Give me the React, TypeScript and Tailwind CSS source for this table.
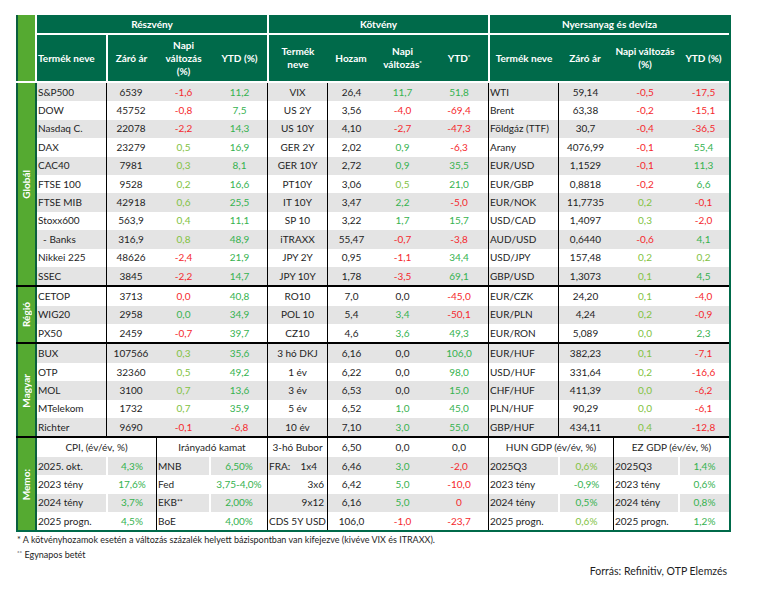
import React from "react"

const GRID = "grid grid-cols-[69px_49px_57px_55px_60px_48px_55px_58px_70px_54px_66px_51px]"
const MEMO_GRID = "grid grid-cols-[69px_50px_53px_58px_60px_48px_55px_58px_70px_55px_65px_51px]"
const GRAY = "bg-[#e4e4e4]"

const TONE: Record<string, string> = {
  r: "text-[#f5282d]",
  g: "text-[#35b24f]",
  l: "text-[#82c23f]",
  k: "text-[#1e1e1e]",
}

// "x:..." forces a colour, otherwise sign/size decides
function tone(v: string): [string, string] {
  if (v[1] === ":") return [v.slice(2), TONE[v[0]]]
  const n = parseFloat(v.replace(",", ".").replace("%", ""))
  if (n < 0) return [v, TONE.r]
  if (n < 1) return [v, TONE.l]
  return [v, TONE.g]
}

type Row = string[]

const globalRows: Row[] = [
  ["S&P500", "6539", "-1,6", "11,2", "VIX", "26,4", "11,7", "51,8", "WTI", "59,14", "-0,5", "-17,5"],
  ["DOW", "45752", "-0,8", "7,5", "US 2Y", "3,56", "-4,0", "-69,4", "Brent", "63,38", "-0,2", "-15,1"],
  ["Nasdaq C.", "22078", "-2,2", "14,3", "US 10Y", "4,10", "-2,7", "-47,3", "Földgáz (TTF)", "30,7", "-0,4", "-36,5"],
  ["DAX", "23279", "0,5", "16,9", "GER 2Y", "2,02", "g:0,9", "-6,3", "Arany", "4076,99", "-0,1", "55,4"],
  ["CAC40", "7981", "0,3", "8,1", "GER 10Y", "2,72", "g:0,9", "35,5", "EUR/USD", "1,1529", "-0,1", "11,3"],
  ["FTSE 100", "9528", "0,2", "16,6", "PT10Y", "3,06", "0,5", "21,0", "EUR/GBP", "0,8818", "-0,2", "6,6"],
  ["FTSE MIB", "42918", "0,6", "25,5", "IT 10Y", "3,47", "2,2", "-5,0", "EUR/NOK", "11,7735", "0,2", "-0,1"],
  ["Stoxx600", "563,9", "0,4", "11,1", "SP 10", "3,22", "1,7", "15,7", "USD/CAD", "1,4097", "0,3", "-2,0"],
  ["\u00a0\u00a0- Banks", "316,9", "0,8", "48,9", "iTRAXX", "55,47", "-0,7", "-3,8", "AUD/USD", "0,6440", "-0,6", "4,1"],
  ["Nikkei 225", "48626", "-2,4", "21,9", "JPY 2Y", "0,95", "-1,1", "34,4", "USD/JPY", "157,48", "0,2", "0,2"],
  ["SSEC", "3845", "-2,2", "14,7", "JPY 10Y", "1,78", "-3,5", "69,1", "GBP/USD", "1,3073", "0,1", "4,5"],
]

const regioRows: Row[] = [
  ["CETOP", "3713", "r:0,0", "40,8", "RO10", "7,0", "k:0,0", "-45,0", "EUR/CZK", "24,20", "0,1", "-4,0"],
  ["WIG20", "2958", "g:0,0", "34,9", "POL 10", "5,4", "3,4", "-50,1", "EUR/PLN", "4,24", "0,2", "-0,9"],
  ["PX50", "2459", "-0,7", "39,7", "CZ10", "4,6", "3,6", "49,3", "EUR/RON", "5,089", "l:0,0", "2,3"],
]

const magyarRows: Row[] = [
  ["BUX", "107566", "0,3", "35,6", "3 hó DKJ", "6,16", "k:0,0", "106,0", "EUR/HUF", "382,23", "0,1", "-7,1"],
  ["OTP", "32360", "0,5", "49,2", "1 év", "6,22", "k:0,0", "98,0", "USD/HUF", "331,64", "0,2", "-16,6"],
  ["MOL", "3100", "0,7", "13,6", "3 év", "6,53", "k:0,0", "15,0", "CHF/HUF", "411,39", "l:0,0", "-6,2"],
  ["MTelekom", "1732", "0,7", "35,9", "5 év", "6,52", "1,0", "45,0", "PLN/HUF", "90,29", "l:0,0", "-6,1"],
  ["Richter", "9690", "-0,1", "-6,8", "10 év", "7,10", "3,0", "55,0", "GBP/HUF", "434,11", "0,4", "-12,8"],
]

type MemoRow = {
  cpi: [string, string]
  rate: [React.ReactNode, string]
  bond: [React.ReactNode, string, string, string]
  hun: [string, string]
  ez: [string, string]
}

const memoRows: MemoRow[] = [
  {
    cpi: ["2025. okt.", "4,3%"],
    rate: ["MNB", "6,50%"],
    bond: [
      <span className="flex w-full pl-[1px] pr-[10px]">
        <span>FRA:</span>
        <span className="ml-auto">1x4</span>
      </span>,
      "6,46", "3,0", "-2,0",
    ],
    hun: ["2025Q3", "0,6%"],
    ez: ["2025Q3", "1,4%"],
  },
  {
    cpi: ["2023 tény", "17,6%"],
    rate: ["Fed", "3,75-4,0%"],
    bond: [<span className="ml-auto pr-[3px]">3x6</span>, "6,42", "5,0", "-10,0"],
    hun: ["2023 tény", "g:-0,9%"],
    ez: ["2023 tény", "g:0,6%"],
  },
  {
    cpi: ["2024 tény", "3,7%"],
    rate: [<span>EKB<sup className="relative top-[-1px] text-[7px]">**</sup></span>, "2,00%"],
    bond: [<span className="ml-auto pr-[3px]">9x12</span>, "6,16", "5,0", "r:0"],
    hun: ["2024 tény", "g:0,5%"],
    ez: ["2024 tény", "g:0,8%"],
  },
  {
    cpi: ["2025 progn.", "4,5%"],
    rate: ["BoE", "4,00%"],
    bond: [<span className="mx-auto">CDS 5Y USD</span>, "106,0", "-1,0", "-23,7"],
    hun: ["2025 progn.", "0,6%"],
    ez: ["2025 progn.", "1,2%"],
  },
]

function Val({ v, className = "" }: { v: string; className?: string }) {
  const [text, cls] = tone(v)
  return <div className={`flex items-center justify-center ${cls} ${className}`}>{text}</div>
}

function DataRow({ r, gray }: { r: Row; gray: boolean }) {
  return (
    <div className={`${GRID} h-[18.4px] ${gray ? GRAY : "bg-white"}`}>
      <div className="flex items-center whitespace-nowrap pl-[1px]">{r[0]}</div>
      <div className="flex items-center justify-center border-l border-black">{r[1]}</div>
      <Val v={r[2]} />
      <Val v={r[3]} />
      <div className="flex items-center justify-center border-l border-black">{r[4]}</div>
      <div className="flex items-center justify-center border-l border-black">{r[5]}</div>
      <Val v={r[6]} />
      <Val v={r[7]} />
      <div className="flex items-center whitespace-nowrap border-l border-black pl-[1px]">{r[8]}</div>
      <div className="flex items-center justify-center border-l border-black">{r[9]}</div>
      <Val v={r[10]} />
      <Val v={r[11]} />
    </div>
  )
}

function Side({ label }: { label: string }) {
  return (
    <div className="flex w-[21px] shrink-0 items-center justify-center border-x-2 border-[#0b5f3d] bg-[#55aa31]">
      <span className="rotate-180 font-bold text-white [writing-mode:vertical-rl]">{label}</span>
    </div>
  )
}

// grayFirst: whether the group's first row is shaded
function Group({ label, rows, first = false, grayFirst }: { label: string; rows: Row[]; first?: boolean; grayFirst: boolean }) {
  return (
    <div className={`flex ${first ? "" : "border-t-2 border-black"}`}>
      <Side label={label} />
      <div className="flex flex-1 flex-col">
        {rows.map((r, i) => (
          <DataRow key={r[0]} r={r} gray={(i % 2 === 0) === grayFirst} />
        ))}
      </div>
    </div>
  )
}

function Memo() {
  return (
    <div className="flex border-t-2 border-black">
      <Side label="Memo:" />
      <div className="flex flex-1 flex-col">
        <div className={`${MEMO_GRID} h-[18.4px] bg-white`}>
          <div className="col-span-2 flex items-center justify-center">CPI, (év/év, %)</div>
          <div className="col-span-2 flex items-center justify-center border-l border-black">Irányadó kamat</div>
          <div className="flex items-center justify-center border-l border-black">3-hó Bubor</div>
          <div className="flex items-center justify-center border-l border-black">6,50</div>
          <div className="flex items-center justify-center">0,0</div>
          <div className="flex items-center justify-center">0,0</div>
          <div className="col-span-2 flex items-center justify-center border-l border-black">HUN GDP (év/év, %)</div>
          <div className="col-span-2 flex items-center justify-center border-l border-black">EZ GDP (év/év, %)</div>
        </div>
        {memoRows.map((m, i) => {
          const bg = i % 2 === 0 ? GRAY : "bg-white"
          return (
            <div key={i} className={`${MEMO_GRID} h-[18.4px]`}>
              <div className={`flex items-center whitespace-nowrap pl-[1px] ${bg}`}>{m.cpi[0]}</div>
              <Val v={m.cpi[1]} className={`border-l-2 border-white ${bg}`} />
              <div className={`flex items-center border-l border-black pl-[1px] ${bg}`}>{m.rate[0]}</div>
              <Val v={m.rate[1]} className={`whitespace-nowrap border-l-2 border-white ${bg}`} />
              <div className={`flex items-center whitespace-nowrap border-l border-black ${bg}`}>{m.bond[0]}</div>
              <div className={`flex items-center justify-center border-l border-black ${bg}`}>{m.bond[1]}</div>
              <Val v={m.bond[2]} className={bg} />
              <Val v={m.bond[3]} className={bg} />
              <div className={`flex items-center whitespace-nowrap border-l border-black pl-[1px] ${bg}`}>{m.hun[0]}</div>
              <Val v={m.hun[1]} className={`border-l-2 border-white ${bg}`} />
              <div className={`flex items-center whitespace-nowrap border-l border-black pl-[1px] ${bg}`}>{m.ez[0]}</div>
              <Val v={m.ez[1]} className={`border-l-2 border-white ${bg}`} />
            </div>
          )
        })}
      </div>
    </div>
  )
}

function Header() {
  return (
    <div className="flex border-b-2 border-white">
      <div className="w-[21px] shrink-0 border-l-2 border-r-2 border-l-[#0b5f3d] border-r-white bg-[#55aa31]" />
      <div className="flex flex-1 flex-col bg-[#006a4a] font-bold text-white">
        <div className="grid h-[20px] grid-cols-[230px_221px_241px] border-b-2 border-white">
          <div className="flex items-center justify-center">Részvény</div>
          <div className="flex items-center justify-center border-l-2 border-white">Kötvény</div>
          <div className="flex items-center justify-center border-l-2 border-white">Nyersanyag és deviza</div>
        </div>
        <div className={`${GRID} h-[46px] leading-[13px]`}>
          <div className="flex items-center pl-[1px]">Termék neve</div>
          <div className="flex items-center justify-center border-l-2 border-white">Záró ár</div>
          <div className="flex items-center justify-center text-center">
            <span>
              Napi
              <br />
              változás
              <br />
              (%)
            </span>
          </div>
          <div className="flex items-center justify-center">YTD (%)</div>
          <div className="flex items-center justify-center border-l-2 border-white text-center">
            <span>
              Termék
              <br />
              neve
            </span>
          </div>
          <div className="flex items-center justify-center">Hozam</div>
          <div className="flex items-center justify-center text-center">
            <span>
              Napi
              <br />
              változás<sup className="text-[6px]">*</sup>
            </span>
          </div>
          <div className="flex items-center justify-center">
            <span>
              YTD<sup className="text-[6px]">*</sup>
            </span>
          </div>
          <div className="flex items-center justify-center whitespace-nowrap border-l-2 border-white">Termék neve</div>
          <div className="flex items-center justify-center">Záró ár</div>
          <div className="flex items-center justify-center text-center">
            <span>
              Napi változás
              <br />
              (%)
            </span>
          </div>
          <div className="flex items-center justify-center">YTD (%)</div>
        </div>
      </div>
    </div>
  )
}

export default function App() {
  return (
    <div className="min-h-[594px] w-[767px] bg-white pl-4 pt-[15px] font-['Lato','Open_Sans',sans-serif] text-[10px] text-[#1e1e1e]">
      <div className="w-[715px] border-b-2 border-r-2 border-[#006a4a]">
        <Header />
        <Group label="Globál" rows={globalRows} first grayFirst />
        <Group label="Régió" rows={regioRows} grayFirst={false} />
        <Group label="Magyar" rows={magyarRows} grayFirst />
        <Memo />
      </div>
      <p className="mt-[1px] pl-[1px] text-[9px] leading-[13px]">
        * A kötvényhozamok esetén a változás százalék helyett bázispontban van kifejezve (kivéve VIX és ITRAXX).
      </p>
      <p className="mt-[2px] pl-[1px] text-[9px] leading-[13px]">
        <sup className="text-[6px]">**</sup> Egynapos betét
      </p>
      <p className="mt-[3px] w-[711px] text-right text-[10.5px]">Forrás: Refinitiv, OTP Elemzés</p>
    </div>
  )
}
